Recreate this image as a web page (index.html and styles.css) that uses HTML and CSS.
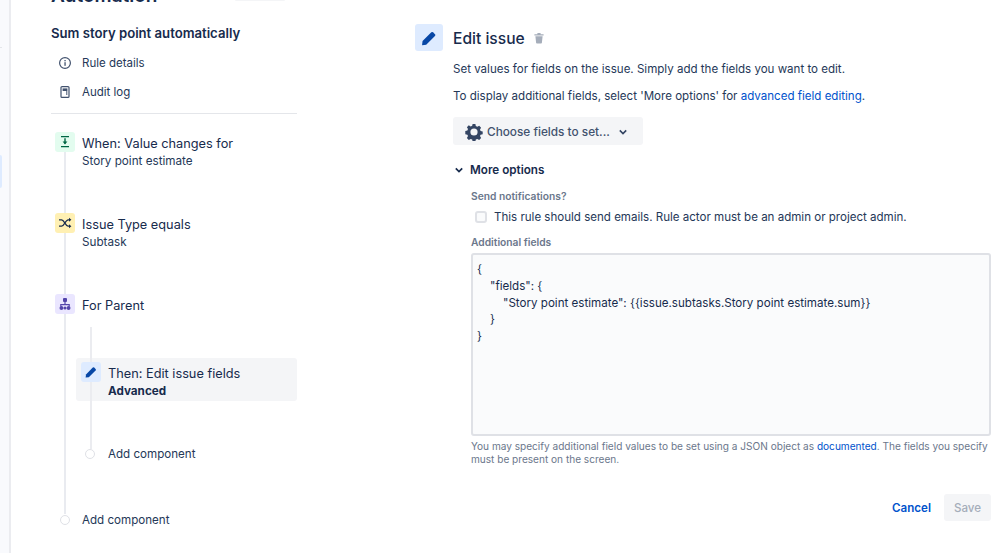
FILE: index.html
```html
<!DOCTYPE html>
<html lang="en">
<head>
<meta charset="utf-8">
<title>Automation</title>
<link rel="stylesheet" href="styles.css">
</head>
<body>
<div class="page">
  <div class="rail"><div class="rail-tick"></div><div class="rail-mark"></div></div>
  <aside class="side">
    <div class="side-head">
      <h1 class="page-title">Automation</h1>
      <div class="head-btn"></div>
    </div>
    <h2 class="rule-name">Sum story point automatically</h2>
    <div class="nav-item nav-first">
      <svg class="nav-icon" viewBox="0 0 14 14"><circle cx="7" cy="7" r="5.4" fill="none" stroke="#42526e" stroke-width="1.2"/><rect x="6.4" y="6.2" width="1.3" height="3.6" fill="#42526e"/><rect x="6.4" y="4" width="1.3" height="1.3" fill="#42526e"/></svg>
      <span>Rule details</span>
    </div>
    <div class="nav-item">
      <svg class="nav-icon" viewBox="0 0 14 14"><rect x="3" y="1.6" width="8" height="10.8" rx="1" fill="none" stroke="#42526e" stroke-width="1.2"/><rect x="4.6" y="3.4" width="4.8" height="2.6" fill="#42526e"/><rect x="8" y="6" width="1.4" height="4" fill="#7a869a"/></svg>
      <span>Audit log</span>
    </div>
    <div class="divider"></div>
    <div class="flow">
      <div class="flow-line"></div>
      <div class="step step-when">
        <div class="badge badge-green">
          <svg viewBox="0 0 14 14" width="14" height="14"><path d="M3 1.7h8M3 11.6h8" stroke="#006644" stroke-width="1.3"/><path d="M7 3.2v5.4" stroke="#006644" stroke-width="1.4"/><path d="M4.6 6.6 7 9.6l2.4-3z" fill="#006644"/></svg>
        </div>
        <div class="step-text"><div class="step-title">When: Value changes for</div><div class="step-sub">Story point estimate</div></div>
      </div>
      <div class="step step-cond">
        <div class="badge badge-yellow">
          <svg viewBox="0 0 14 14" width="14" height="14"><path d="M1 3.8h2.6c2.6 0 3.8 6.4 6.6 6.4H12M1 10.2h2.6c2.6 0 3.8-6.4 6.6-6.4H12" fill="none" stroke="#172b4d" stroke-width="1.2"/><path d="M11 1.8l2.4 2-2.4 2zM11 8.2l2.4 2-2.4 2z" fill="#172b4d"/></svg>
        </div>
        <div class="step-text"><div class="step-title">Issue Type equals</div><div class="step-sub">Subtask</div></div>
      </div>
      <div class="step step-branch">
        <div class="badge badge-purple">
          <svg viewBox="0 0 14 14" width="14" height="14"><rect x="5" y="1" width="4" height="4" rx="1" fill="#5243aa"/><path d="M7 4.5v3M2.8 9.5V7.6h8.4v1.9" fill="none" stroke="#5243aa" stroke-width="1.2"/><circle cx="3.4" cy="11" r="1.9" fill="#5243aa"/><circle cx="10.6" cy="11" r="1.9" fill="#5243aa"/><circle cx="7" cy="11" r="1.6" fill="#5243aa"/></svg>
        </div>
        <div class="step-text"><div class="step-title">For Parent</div></div>
      </div>
      <div class="nested">
        <div class="nested-line"></div>
        <div class="active-step">
          <div class="badge badge-blue">
            <svg viewBox="0 0 14 14" width="14" height="14"><path d="M2 9.4 8.8 2.6a1 1 0 0 1 1.4 0l1.4 1.4a1 1 0 0 1 0 1.4L4.8 12.2 1.6 12.6z" fill="#0747a6"/></svg>
          </div>
          <div class="step-text"><div class="step-title">Then: Edit issue fields</div><div class="step-sub step-bold">Advanced</div></div>
        </div>
        <div class="add add-inner"><span class="dot"></span><span>Add component</span></div>
      </div>
      <div class="add add-outer"><span class="dot"></span><span>Add component</span></div>
    </div>
  </aside>
  <main class="main">
    <header class="main-head">
      <div class="head-icon">
        <svg viewBox="0 0 14 14" width="18" height="18"><path d="M2 9.4 8.8 2.6a1 1 0 0 1 1.4 0l1.4 1.4a1 1 0 0 1 0 1.4L4.8 12.2 1.6 12.6z" fill="#0747a6"/></svg>
      </div>
      <h2 class="main-title">Edit issue</h2>
      <svg class="trash" viewBox="0 0 12 12" width="12" height="12"><path d="M1.4 2.2h9.2v1.3H1.4zM4.4 1h3.2v1.2H4.4z" fill="#a5adba"/><path d="M2.4 4.2h7.2l-.7 6.6a.8.8 0 0 1-.8.7H3.9a.8.8 0 0 1-.8-.7z" fill="#a5adba"/></svg>
    </header>
    <div class="body">
      <p class="para para-first">Set values for fields on the issue. Simply add the fields you want to edit.</p>
      <p class="para para-second">To display additional fields, select 'More options' for <a class="link">advanced field editing</a>.</p>
      <button class="choose">
        <svg viewBox="0 0 18 18" width="18" height="18"><path d="M7.6 1.2h2.8l.4 2.1 1.5.7 1.9-1.1 1.9 2-1.1 1.8.6 1.5 2.1.4v2.8l-2.1.5-.6 1.4 1.1 1.9-1.9 2-1.9-1.1-1.5.6-.4 2.1H7.6l-.4-2.1-1.5-.6-1.9 1.1-1.9-2 1.1-1.9-.6-1.4-2.1-.5V8.2l2.1-.4.6-1.5-1.1-1.8 1.9-2 1.9 1.1 1.5-.7zM9 5.6a3.6 3.6 0 1 0 0 7.2 3.6 3.6 0 0 0 0-7.2z" fill="#344563" fill-rule="evenodd" transform="translate(0 -.2)"/></svg>
        <span class="choose-label">Choose fields to set...</span>
        <svg class="chev" viewBox="0 0 10 10" width="10" height="10"><path d="M1.8 3.4 5 6.6l3.2-3.2" fill="none" stroke="#344563" stroke-width="1.6"/></svg>
      </button>
      <div class="more">
        <svg viewBox="0 0 10 10" width="10" height="10"><path d="M1.8 3.4 5 6.6l3.2-3.2" fill="none" stroke="#172b4d" stroke-width="1.7"/></svg>
        <span>More options</span>
      </div>
      <div class="fields">
        <div class="label label-first">Send notifications?</div>
        <div class="check-row"><span class="check"></span><span>This rule should send emails. Rule actor must be an admin or project admin.</span></div>
        <div class="label label-second">Additional fields</div>
        <div class="code"><div>{</div><div class="in1">"fields": {</div><div class="in2">"Story point estimate": {{issue.subtasks.Story point estimate.sum}}</div><div class="in1">}</div><div>}</div></div>
        <p class="help">You may specify additional field values to be set using a JSON object as <a class="link">documented</a>. The fields you specify must be present on the screen.</p>
        <div class="actions"><a class="cancel">Cancel</a><button class="save">Save</button></div>
      </div>
    </div>
  </main>
</div>
</body>
</html>
```
FILE: styles.css
```css
* { box-sizing: border-box; }
html, body { margin: 0; height: 100%; overflow: hidden; background: #fff; }
body { font-family: Inter, "Liberation Sans", sans-serif; color: #172b4d; font-size: 11.6px; }
.page { display: flex; height: 553px; overflow: hidden; }
.rail { width: 11px; flex: none; background: #f9fafd; border-right: 2px solid #ebecf0; padding-top: 47px; }
.rail-tick { width: 2px; height: 1px; background: #e4e6ea; }
.rail-mark { width: 2px; height: 33px; margin-top: 107px; background: #deebff; border-radius: 0 2px 2px 0; }
.side { width: 286px; flex: none; padding-left: 40px; }
.side-head { display: flex; justify-content: space-between; height: 20px; margin-top: -13px; width: 235px; }
.page-title { margin: 0; font-size: 19px; line-height: 18px; font-weight: 600; color: #172b4d; }
.head-btn { width: 52px; height: 14px; background: #f4f5f7; border-radius: 3px; }
.rule-name { margin: 16px 0 0; font-size: 13.15px; line-height: 20px; font-weight: 600; }
.nav-item { display: flex; align-items: center; height: 29px; font-size: 11.5px; color: #253858; }
.nav-first { margin-top: 5px; }
.nav-icon { width: 14px; height: 14px; margin: 0 10px 0 7px; flex: none; }
.divider { height: 1px; background: #e4e6ea; margin-top: 7px; }
.flow { position: relative; padding-top: 18px; }
.flow-line { position: absolute; left: 13px; top: 38px; width: 2px; height: 362px; background: #e9ebf0; }
.step, .active-step { display: flex; position: relative; }
.step { padding-left: 4px; }
.step-text { padding-top: 1px; }
.badge { width: 20px; height: 20px; border-radius: 3px; flex: none; display: flex; align-items: center; justify-content: center; margin-right: 7px; }
.badge-green { background: #e3fcef; }
.badge-yellow { background: #fff0b3; }
.badge-purple { background: #eae6ff; }
.badge-blue { background: #deebff; }
.step-title { font-size: 12.75px; line-height: 22px; color: #172b4d; }
.step-sub { font-size: 11.7px; line-height: 17px; margin-top: -2px; color: #253858; }
.step-bold { font-weight: 700; color: #172b4d; }
.step-when { height: 81px; }
.step-cond { height: 81px; }
.step-branch { height: 33px; }
.nested { position: relative; padding: 31px 0 0 25px; }
.nested-line { position: absolute; left: 39px; top: 0; width: 2px; height: 122px; background: #ebecf0; z-index: 1; }
.active-step { height: 43px; padding: 4px 0 0 5px; background: #f4f5f7; border-radius: 3px; }
.active-step .badge { position: relative; z-index: 2; }
.add { display: flex; align-items: center; height: 18px; font-size: 11.6px; color: #253858; position: relative; z-index: 2; }
.add-inner { margin-top: 44px; padding-left: 9px; }
.add-outer { margin-top: 48px; padding-left: 9px; }
.dot { width: 10px; height: 10px; border: 1px solid #dfe1e6; border-radius: 50%; background: #fff; margin-right: 13px; flex: none; }
.add-outer .dot { margin-right: 12px; }
.main { flex: 1; padding: 24px 8px 0 118px; min-width: 0; }
.main-head { display: flex; align-items: center; height: 27px; }
.head-icon { width: 28px; height: 27px; background: #deebff; border-radius: 3px; display: flex; align-items: center; justify-content: center; margin-right: 10px; }
.main-title { margin: 0; padding-top: 2px; font-size: 15.6px; line-height: 24px; font-weight: 500; }
.trash { margin-left: 8px; }
.body { padding-left: 38px; }
.para { margin: 0; font-size: 11.56px; line-height: 17px; color: #253858; }
.para-first { margin-top: 10px; }
.para-second { margin-top: 10px; }
.link { color: #0052cc; }
.choose { display: flex; align-items: center; width: 190px; height: 28px; margin-top: 12px; padding: 1px 0 0 12px; border: 0; border-radius: 3px; background: #f4f5f7; font: inherit; font-size: 11.8px; color: #42526e; }
.choose-label { margin: 0 8px 0 4px; font-weight: 500; }
.more { display: flex; align-items: center; gap: 6px; margin-top: 16px; height: 18px; font-size: 11.7px; font-weight: 600; padding-left: 1px; }
.fields { padding-left: 18px; }
.label { font-size: 10.25px; line-height: 14px; font-weight: 600; color: #6b778c; }
.label-first { margin-top: 10px; }
.label-second { margin-top: 9px; }
.check-row { display: flex; align-items: center; height: 18px; margin-top: 5px; padding-left: 4px; font-size: 11.55px; color: #253858; }
.check { width: 12px; height: 12px; border: 2px solid #dfe1e6; border-radius: 3px; background: #fafbfc; margin-right: 7px; flex: none; }
.code { height: 183px; margin-top: 4px; padding: 6px 4px; background: #fafbfc; border: 2px solid #dfe1e6; border-radius: 3px; font-size: 11.6px; line-height: 16.8px; color: #172b4d; }
.in1 { padding-left: 13px; }
.in2 { padding-left: 26px; }
.help { margin: 4px 0 0; font-size: 10.08px; line-height: 13px; color: #6b778c; }
.actions { display: flex; justify-content: flex-end; align-items: center; gap: 13px; margin-top: 28px; }
.cancel { color: #0052cc; font-weight: 600; font-size: 11.6px; }
.save { width: 47px; height: 27px; border: 0; border-radius: 3px; background: #f4f5f7; color: #a5adba; font: inherit; font-weight: 500; }
```
